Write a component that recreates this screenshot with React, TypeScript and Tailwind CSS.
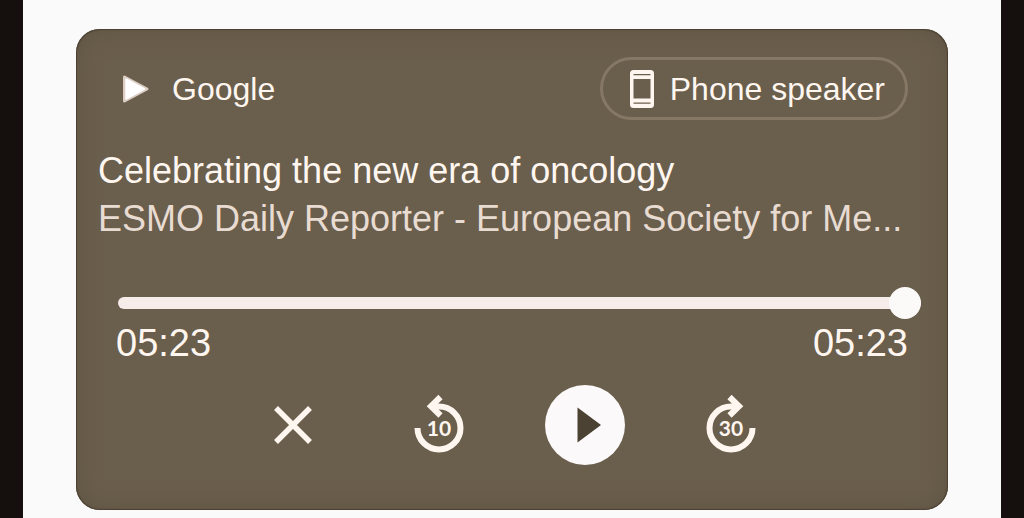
import { useState } from 'react';

interface SkipIconProps {
  seconds: number;
  forward?: boolean;
}

function SkipIcon({ seconds, forward = false }: SkipIconProps) {
  return (
    <svg viewBox="0 0 80 80" className="h-20 w-20" aria-hidden="true">
      <g
        transform={forward ? 'translate(80 0) scale(-1 1)' : undefined}
        fill="none"
        stroke="currentColor"
      >
        <path d="M18.5 43a21.5 21.5 0 1 0 21.500-21.500h-6" strokeWidth="6" />
        <path d="M41.500 12 32 21.250 41.500 30.500" strokeWidth="6" />
      </g>
      <text
        x="40"
        y="51"
        textAnchor="middle"
        fill="currentColor"
        className="font-['Lato',sans-serif] text-[21px] font-bold"
      >
        {seconds}
      </text>
    </svg>
  );
}

function App() {
  const duration = 323;
  const [position, setPosition] = useState(duration);

  const format = (s: number) =>
    `${String(Math.floor(s / 60)).padStart(2, '0')}:${String(s % 60).padStart(2, '0')}`;

  const skip = (delta: number) => {
    setPosition((p) => Math.min(duration, Math.max(0, p + delta)));
  };

  return (
    <div className="min-h-screen bg-[#15100e] px-[23px] font-['Liberation_Sans',Arial,sans-serif]">
      <main className="min-h-screen bg-[#fafafa] px-[53px] pt-[29px] pb-2">
        <section className="rounded-3xl bg-[#6a5e4c] px-[22px] pt-7 pb-[45px] text-[#fff6f0] shadow-[inset_0_0_1px_1px_#4a4032,inset_0_0_24px_#5f5443]">

          {/* HEADER */}
          <header className="flex items-center justify-between pr-[18px] pl-6">
            <div className="flex items-center gap-[22px]">
              <svg viewBox="0 0 28 30" className="h-[30px] w-7" aria-hidden="true">
                <path
                  d="M2.500 3v24L25 15z"
                  fill="#dccdc4"
                  stroke="#dccdc4"
                  strokeWidth="3"
                  strokeLinejoin="round"
                />
                <path
                  d="M4 5v20L22.500 15z"
                  fill="#fff"
                  stroke="#fff"
                  strokeWidth="1.500"
                  strokeLinejoin="round"
                />
              </svg>
              <span className="text-[32px] leading-10">Google</span>
            </div>
            <button className="flex h-[63px] items-center gap-4 rounded-full border-3 border-[#857865] pr-5 pl-[27px]">
              <svg viewBox="0 0 24 38" className="h-[38px] w-6" aria-hidden="true">
                <path
                  fill="currentColor"
                  fillRule="evenodd"
                  d="M3.500 0h17a3.500 3.500 0 0 1 3.500 3.500v31a3.500 3.500 0 0 1-3.500 3.500h-17a3.500 3.500 0 0 1-3.500-3.500v-31a3.500 3.500 0 0 1 3.500-3.500zM3.500 4v1.200h17V4zM3.500 9v19.500h17V9zM3.500 32.500v1.200h17v-1.200z"
                />
              </svg>
              <span className="text-[32px] leading-10">Phone speaker</span>
            </button>
          </header>

          {/* TRACK INFO */}
          <div className="mt-[27px]">
            <h1 className="truncate text-[36px] leading-[48px]">Celebrating the new era of oncology</h1>
            <p className="truncate text-[36px] leading-[48px] text-[#e8dbd1]">
              ESMO Daily Reporter - European Society for Me...
            </p>
          </div>

          {/* PROGRESS */}
          <div className="mt-11 pr-[5px] pl-5">
            <input
              type="range"
              aria-label="Playback position"
              min={0}
              max={duration}
              value={position}
              onChange={(e) => setPosition(Number(e.target.value))}
              className="block h-8 w-full appearance-none bg-transparent [&::-webkit-slider-runnable-track]:h-3 [&::-webkit-slider-runnable-track]:rounded-full [&::-webkit-slider-runnable-track]:bg-[#f6edea] [&::-webkit-slider-thumb]:-mt-[10px] [&::-webkit-slider-thumb]:h-8 [&::-webkit-slider-thumb]:w-8 [&::-webkit-slider-thumb]:appearance-none [&::-webkit-slider-thumb]:rounded-full [&::-webkit-slider-thumb]:bg-[#fcfaf9]"
            />
            <div className="-ml-0.5 flex justify-between pr-[13px] text-[38px] leading-[48px]">
              <span>{format(position)}</span>
              <span>{format(duration)}</span>
            </div>
          </div>

          {/* CONTROLS */}
          <div className="mt-[18px] flex justify-center gap-[66px]">
            <button aria-label="Close" className="h-20 w-20">
              <svg viewBox="0 0 80 80" className="h-20 w-20" aria-hidden="true">
                <path d="M23 23 57 57M57 23 23 57" stroke="currentColor" strokeWidth="5.500" />
              </svg>
            </button>
            <button aria-label="Back 10 seconds" onClick={() => skip(-10)} className="h-20 w-20">
              <SkipIcon seconds={10} />
            </button>
            <button aria-label="Play" className="h-20 w-20 rounded-full bg-[#fbf9f9] text-[#4c4233]">
              <svg viewBox="0 0 80 80" className="h-20 w-20" aria-hidden="true">
                <path d="M32.500 22.500v35L56 40z" fill="currentColor" />
              </svg>
            </button>
            <button aria-label="Forward 30 seconds" onClick={() => skip(30)} className="h-20 w-20">
              <SkipIcon seconds={30} forward />
            </button>
          </div>
        </section>
      </main>
    </div>
  );
}

export default App;
